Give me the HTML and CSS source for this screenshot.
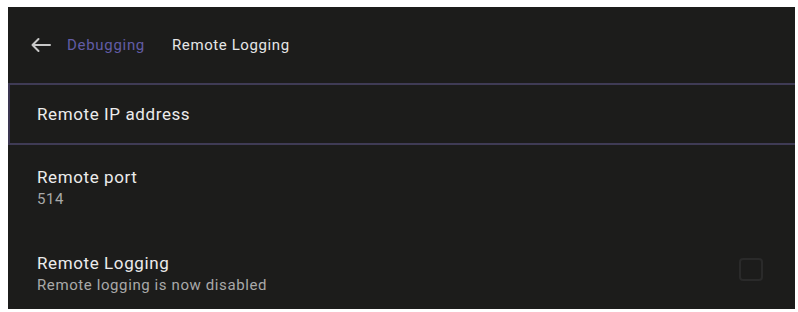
FILE: index.html
```html
<!DOCTYPE html>
<html lang="en">

<head>
    <meta charset="UTF-8">
    <meta name="viewport" content="width=device-width, initial-scale=1.0">
    <title>Remote Logging</title>
    <link rel="stylesheet" href="styles.css">
</head>

<body>
    <div class="panel">
        <header class="bar">
            <svg class="back" width="22" height="16" viewBox="0 0 22 16">
                <path d="M20 8H2.5M8.5 2L2.5 8l6 6" fill="none" stroke="#c8c8c8" stroke-width="2" stroke-linecap="round" stroke-linejoin="round" />
            </svg>
            <span class="crumb">Debugging</span>
            <span class="title">Remote Logging</span>
        </header>
        <div class="list">
            <div class="row selected">
                <div class="label">Remote IP address</div>
            </div>
            <div class="row port">
                <div class="label">Remote port</div>
                <div class="sub">514</div>
            </div>
            <div class="row toggle">
                <div class="text">
                    <div class="label">Remote Logging</div>
                    <div class="sub">Remote logging is now disabled</div>
                </div>
                <div class="check"></div>
            </div>
        </div>
    </div>
</body>

</html>
```

FILE: styles.css
```css
* {
    margin: 0;
    padding: 0;
    box-sizing: border-box;
}

html,
body {
    width: 100%;
    height: 100%;
    background: #fff;
}

body {
    padding: 7px 3px 3px 8px;
    font-family: Roboto, "Noto Sans", sans-serif;
}

.panel {
    width: 787px;
    height: 302px;
    background: #1c1c1b;
    display: flex;
    flex-direction: column;
}

.bar {
    height: 78px;
    display: flex;
    align-items: center;
    padding-left: 22px;
    border-bottom: 2px solid #3f3b55;
}

.back {
    margin-right: 15px;
}

.crumb {
    color: #625ca6;
    font-size: 15px;
    letter-spacing: 0.7px;
    margin-right: 27px;
}

.title {
    color: #e6e6e6;
    font-size: 15px;
    letter-spacing: 0.6px;
}

.row {
    padding-left: 29px;
    color: #ececec;
}

.label {
    font-size: 17px;
    letter-spacing: 0.6px;
    line-height: 24px;
}

.sub {
    font-size: 15px;
    letter-spacing: 0.6px;
    line-height: 20px;
    color: #a9a9a9;
}

.selected {
    height: 60px;
    display: flex;
    align-items: center;
    border-bottom: 2px solid #3f3b55;
    border-left: 2px solid #3a3550;
    padding-left: 27px;
}

.port {
    padding-top: 20px;
    height: 106px;
}

.toggle {
    display: flex;
    align-items: center;
    justify-content: space-between;
    padding-right: 32px;
}

.check {
    width: 24px;
    height: 23px;
    margin-bottom: 7px;
    border: 2px solid #2a2a2a;
    border-radius: 4px;
}
```
